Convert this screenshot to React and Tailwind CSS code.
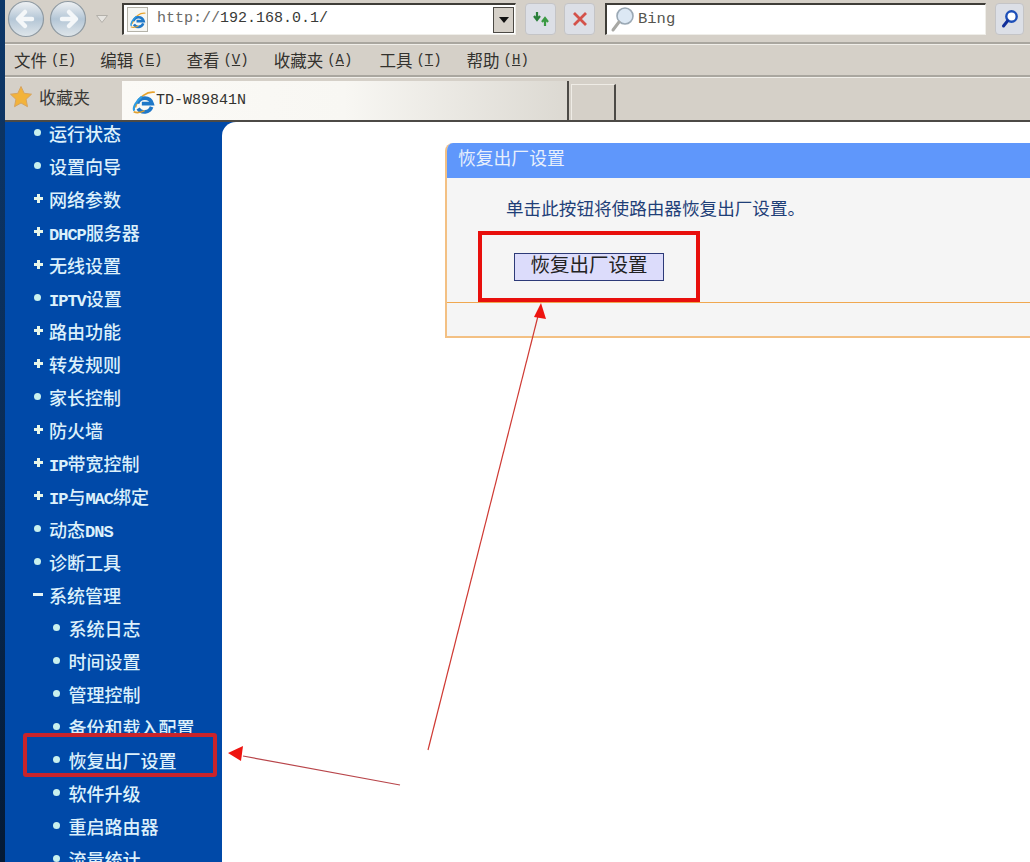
import React from "react";

const cjk = { fontFamily: '"Noto Sans CJK SC", sans-serif' };

const nav = [
  ["dot", "运行状态"], ["dot", "设置向导"], ["plus", "网络参数"], ["plus", "DHCP服务器"], ["plus", "无线设置"],
  ["dot", "IPTV设置"], ["plus", "路由功能"], ["plus", "转发规则"], ["dot", "家长控制"], ["plus", "防火墙"],
  ["plus", "IP带宽控制"], ["plus", "IP与MAC绑定"], ["dot", "动态DNS"], ["dot", "诊断工具"], ["minus", "系统管理"],
  ["sub", "系统日志"], ["sub", "时间设置"], ["sub", "管理控制"], ["sub", "备份和载入配置"], ["sub", "恢复出厂设置"],
  ["sub", "软件升级"], ["sub", "重启路由器"], ["sub", "流量统计"],
];

function Mixed({ text }) {
  return text.split(/([A-Za-z]+)/).map((part, i) =>
    /^[A-Za-z]+$/.test(part) ? (
      <span key={i} className="text-[17px] font-bold font-['Liberation_Mono',monospace] tracking-[-1px]">{part}</span>
    ) : (
      <span key={i}>{part}</span>
    )
  );
}

function Marker({ kind }) {
  if (kind === "plus")
    return (
      <svg width="11" height="11" viewBox="0 0 11 11" className="shrink-0"><path d="M5.5 1v9M1 5.5h9" stroke="#e8f6e8" strokeWidth="3" /></svg>
    );
  if (kind === "minus") return <div className="w-[10px] h-[3px] bg-[#e6f4f4] shrink-0" />;
  return <div className="w-[7px] h-[7px] rounded-full bg-[#c8f0ee] shrink-0 mx-[1px]" />;
}

function NavItem({ kind, label }) {
  const sub = kind === "sub";
  const latin = /[A-Za-z]/.test(label);
  return (
    <div className={`h-[33px] flex items-center text-[18px] leading-none text-[#dcf0fb] font-medium ${sub ? "pl-[47px]" : "pl-[27.5px]"}`} style={cjk}>
      <span className="w-[15.5px] flex justify-start items-center shrink-0 mr-[1px]"><Marker kind={kind} /></span>
      <span className={`whitespace-nowrap ${latin ? "pt-[4px]" : ""}`}><Mixed text={label} /></span>
    </div>
  );
}

function NavButton({ dir }) {
  const d = dir === "left" ? "M25 19H13M18 12l-7 7 7 7" : "M13 19h12M20 12l7 7-7 7";
  return (
    <svg width="38" height="38" viewBox="0 0 38 38" className="shrink-0">
      <defs>
        <linearGradient id={`g${dir}`} x1="0" y1="0" x2="0" y2="1">
          <stop offset="0" stopColor="#f0f2f4" />
          <stop offset="0.5" stopColor="#b4c6d6" />
          <stop offset="1" stopColor="#dfe6ea" />
        </linearGradient>
      </defs>
      <circle cx="19" cy="19" r="17.5" fill={`url(#g${dir})`} stroke="#8f9aa2" strokeWidth="1.2" />
      <path d={d} fill="none" stroke="#f4f7f9" strokeWidth="4.5" strokeLinecap="round" strokeLinejoin="round" />
    </svg>
  );
}

function IeLogo({ size = 22 }) {
  return (
    <svg width={size} height={size} viewBox="0 0 24 24" className="shrink-0">
      <path d="M4 17C7 7 15 2 22 3" fill="none" stroke="#e8a32c" strokeWidth="1.6" />
      <path d="M6 13.5a7 7 0 0 1 13.5 0H10M19 16.5a7 7 0 0 1-12.5 1.5" fill="none" stroke="#1f78c8" strokeWidth="3.4" />
      <path d="M3 20c-1.5-3 2-9 7-13" fill="none" stroke="#2f9ce0" strokeWidth="2" />
      <path d="M2.5 21c3 1.5 7 .5 10-1" fill="none" stroke="#e0a030" strokeWidth="1.4" />
    </svg>
  );
}

function ToolBtn({ children, className = "" }) {
  return (
    <div className={`h-[32px] rounded-[4px] bg-[#dcdfe6] border border-[#c4c4c6] flex items-center justify-center shrink-0 ${className}`}>
      {children}
    </div>
  );
}

function MenuItem({ label, hot, className }) {
  return (
    <div className={`flex items-center text-[16.5px] text-[#33322e] whitespace-nowrap ${className}`} style={cjk}>
      {label}
      <span className="ml-[4px] text-[14px] font-['Liberation_Mono',monospace]">
        (<span className="underline">{hot}</span>)
      </span>
    </div>
  );
}

export default function App() {
  return (
    <div className="relative flex w-[1030px] h-[862px] overflow-hidden bg-white">
      <div className="w-[5px] shrink-0 bg-gradient-to-b from-[#0d3768] via-[#0a2d58] to-[#041a36]" />
      <div className="flex-1 min-w-0 flex flex-col">
        {/* address bar row */}
        <div className="h-[44px] shrink-0 bg-[#d5d0c8] border-b-[2px] border-b-[#a9a69f] flex items-center pb-[4px] pl-[2px]">
          <NavButton dir="left" />
          <div className="w-[4px]" />
          <NavButton dir="right" />
          <svg width="14" height="10" viewBox="0 0 14 10" className="ml-[8px] shrink-0"><path d="M1.5 1.5h11L7 8.5z" fill="#e6e4e0" stroke="#b3b0aa" /></svg>
          <div className="ml-[13px] w-[394px] h-[32px] shrink-0 bg-white border-l-[2px] border-t-[2px] border-[#3f3d38] border-r border-b border-r-[#efeee9] border-b-[#efeee9] flex items-center">
            <div className="ml-[3px] w-[21px] h-[25px] border border-[#b4b2a8] bg-[#f6f6f2] flex items-center justify-center"><IeLogo size={18} /></div>
            <span className="ml-[9px] text-[15px] text-[#6a6a66] font-['Liberation_Mono',monospace]">http://<span className="text-[#3a3a38]">192.168.0.1/</span></span>
            <div className="ml-auto mr-[1px] w-[21px] h-[26px] bg-[#d5d0c8] border border-[#4c4a45] flex items-center justify-center">
              <svg width="10" height="6" viewBox="0 0 10 6"><path d="M0 0h10L5 6z" fill="#111" /></svg>
            </div>
          </div>
          <ToolBtn className="ml-[9px] w-[31px]">
            <svg width="24" height="20" viewBox="0 0 24 20"><path d="M8 3v7M5 7l3 4 3-4" fill="none" stroke="#2a7f3a" strokeWidth="2.2" /><path d="M16 17v-7M13 13l3-4 3 4" fill="none" stroke="#3a9a42" strokeWidth="2.2" /></svg>
          </ToolBtn>
          <ToolBtn className="ml-[8px] w-[31px]">
            <svg width="18" height="18" viewBox="0 0 18 18"><path d="M3 3l12 12M15 3L3 15" stroke="#d4524a" strokeWidth="2.8" /></svg>
          </ToolBtn>
          <div className="ml-[10px] w-[381px] h-[32px] shrink-0 bg-white border-l-[2px] border-t-[2px] border-[#3f3d38] border-r border-b border-r-[#efeee9] border-b-[#efeee9] flex items-center">
            <svg width="26" height="28" viewBox="0 0 26 28" className="ml-[3px] shrink-0">
              <circle cx="15" cy="10" r="8" fill="#dce8f4" stroke="#9aa8b4" strokeWidth="1.6" />
              <path d="M9 16l-6 8" stroke="#a8a8a4" strokeWidth="3" strokeLinecap="round" />
            </svg>
            <span className="ml-[2px] text-[15.5px] text-[#55554f] font-['Liberation_Mono',monospace]">Bing</span>
          </div>
          <ToolBtn className="ml-[9px] w-[29px]">
            <svg width="18" height="20" viewBox="0 0 18 20"><circle cx="10.5" cy="7.5" r="5.2" fill="#fff" stroke="#1d4fb8" strokeWidth="2.4" /><path d="M6.5 12l-4 5" stroke="#122f9a" strokeWidth="3" strokeLinecap="round" /></svg>
          </ToolBtn>
        </div>

        {/* menu row */}
        <div className="h-[33px] shrink-0 bg-[#d5d0c8] border-t border-t-[#f0eee9] border-b-[2px] border-b-[#a9a69f] flex items-center pl-[9px]">
          <MenuItem label="文件" hot="F" />
          <MenuItem label="编辑" hot="E" className="ml-[24px]" />
          <MenuItem label="查看" hot="V" className="ml-[24px]" />
          <MenuItem label="收藏夹" hot="A" className="ml-[25px]" />
          <MenuItem label="工具" hot="T" className="ml-[27px]" />
          <MenuItem label="帮助" hot="H" className="ml-[25px]" />
        </div>

        {/* favourites row */}
        <div className="h-[45px] shrink-0 bg-[#d5d0c8] border-t border-t-[#f0eee9] border-b-[2px] border-b-[#4c4a46] flex items-end">
          <div className="self-center flex items-center ml-[4px] w-[113px] pb-[4px]">
            <svg width="24" height="24" viewBox="0 0 24 24" className="shrink-0">
              <path d="M12 1.5l3.2 6.8 7.3.9-5.4 5.1 1.4 7.4L12 18l-6.5 3.7 1.4-7.4L1.5 9.2l7.3-.9z" fill="#f3b33a" stroke="#d7a460" strokeWidth="1" />
            </svg>
            <span className="ml-[6px] text-[17px] text-[#3a3936]" style={cjk}>收藏夹</span>
          </div>
          <div className="w-[447px] h-[39px] bg-gradient-to-r from-[#fbfaf6] via-[#f8f7f3] to-[#dcd9d2] border-r-[2px] border-r-[#4c4a46] flex items-center pl-[9px] pt-[2px]">
            <IeLogo size={26} />
            <span className="ml-[-1px] text-[15px] text-[#33322f] font-['Liberation_Mono',monospace]">TD-W89841N</span>
          </div>
          <div className="ml-[2px] w-[45px] h-[36px] bg-[#d5d0c8] border-t border-l border-[#efece6] border-r-[2px] border-r-[#4c4a46]" />
        </div>

        {/* page */}
        <div className="flex-1 min-h-0 flex bg-[#0049a8] overflow-hidden">
          <div className="w-[217px] shrink-0 -mt-[6px]">
            {nav.map(([kind, label]) => (
              <NavItem key={label} kind={kind} label={label} />
            ))}
          </div>
          <div className="flex-1 min-w-0 bg-white rounded-tl-[14px] pl-[223px] pt-[21px]">
            <div className="h-[195px] rounded-tl-[8px] border-solid border-l-2 border-b-2 border-t-0 border-r-0 border-[#f3c083] bg-[#f5f5f5] flex flex-col overflow-hidden" style={cjk}>
              <div className="h-[35px] shrink-0 bg-[#5f97fb] flex items-center pl-[11px] pb-[6px] text-[17.8px] text-[#e8f0fb]">恢复出厂设置</div>
              <div className="h-[125px] shrink-0 border-b-[1.5px] border-[#f0a850] pl-[59px] pt-[16px]">
                <div className="text-[17.6px] leading-[28px] text-[#1f3f78] whitespace-nowrap">单击此按钮将使路由器恢复出厂设置。</div>
                <div className="mt-[31px] ml-[8px] w-[150px] h-[28px] bg-[#dcdcfb] border border-[#2d3a78] flex justify-center items-start text-[19.5px] leading-[20px] text-[#222]">恢复出厂设置</div>
              </div>
            </div>
          </div>
        </div>
      </div>

      {/* annotations drawn over the page */}
      <div className="absolute left-[23px] top-[733px] w-[194px] h-[44px] border-[4px] border-[#c9242b] rounded-[3px]" />
      <div className="absolute left-[478px] top-[231px] w-[222px] h-[71px] border-[4px] border-[#e80f0c]" />
      <svg className="absolute inset-0 pointer-events-none" width="1030" height="862" viewBox="0 0 1030 862">
        <path d="M428 750L538 316" stroke="#cf3a34" strokeWidth="1.2" />
        <path d="M541 303l5 16-12-2z" fill="#ee1410" />
        <path d="M400 785L243 756" stroke="#b8454a" strokeWidth="1.2" />
        <path d="M228 753l15-7-2 15z" fill="#ee1410" />
      </svg>
    </div>
  );
}
